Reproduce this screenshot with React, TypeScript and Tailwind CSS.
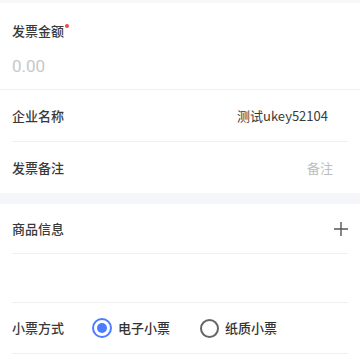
export default function App() {
  return (
    <div
      className="w-[360px] h-[360px] overflow-hidden bg-white text-[#333]"
      style={{ fontFamily: '"Noto Sans CJK SC", "Noto Sans", sans-serif' }}
    >
      <div className="h-[3px] bg-[#f7f8fa]" />
      <div className="px-3 border-b border-[#eef0f3]">
        <div className="h-[48px] flex items-end pb-[11px] text-[13px] font-medium text-[#3a3a3a]">
          发票金额
          <span className="inline-block w-[4px] h-[4px] rounded-full bg-[#f04a4a] ml-[1px] mb-[12px]" />
        </div>
        <div className="h-[38px] pt-[3px] text-[17px] text-[#c8c8c8]" style={{ fontFamily: 'Roboto, sans-serif' }}>
          0.00
        </div>
      </div>
      <div className="h-[52px] mx-3 flex items-center justify-between border-b border-[#eef0f3] text-[13px]">
        <span className="font-medium text-[#3a3a3a]">企业名称</span>
        <span className="mr-5 text-[#3a3a3a]">测试ukey52104</span>
      </div>
      <div className="h-[51px] px-3 flex items-center justify-between text-[13px]">
        <span className="font-medium text-[#3a3a3a]">发票备注</span>
        <span className="mr-[15px] text-[#bdbdbd]">备注</span>
      </div>
      <div className="h-[11px] bg-[#f5f6fa]" />
      <div className="h-[50px] mx-3 flex items-center justify-between border-b border-[#eef0f3] text-[13px]">
        <span className="font-medium text-[#3a3a3a]">商品信息</span>
        <svg width="16" height="16" viewBox="0 0 16 16" className="-mr-[1px]">
          <path d="M8 1v14M1 8h14" stroke="#555" strokeWidth="1.4" />
        </svg>
      </div>
      <div className="h-[49px] mx-3 border-b border-[#eef0f3]" />
      <div className="h-[51px] mx-3 flex items-center border-b border-[#eef0f3] text-[13px]">
        <span className="font-medium text-[#3a3a3a] w-[80px]">小票方式</span>
        <span className="w-5 h-5 rounded-full border-2 border-[#4a7dff] flex items-center justify-center">
          <span className="w-[10px] h-[10px] rounded-full bg-[#4a7dff]" />
        </span>
        <span className="ml-[6px] font-medium">电子小票</span>
        <span className="ml-[30px] w-[19px] h-[19px] rounded-full border-2 border-[#666]" />
        <span className="ml-[6px] font-medium">纸质小票</span>
      </div>
    </div>
  );
}
